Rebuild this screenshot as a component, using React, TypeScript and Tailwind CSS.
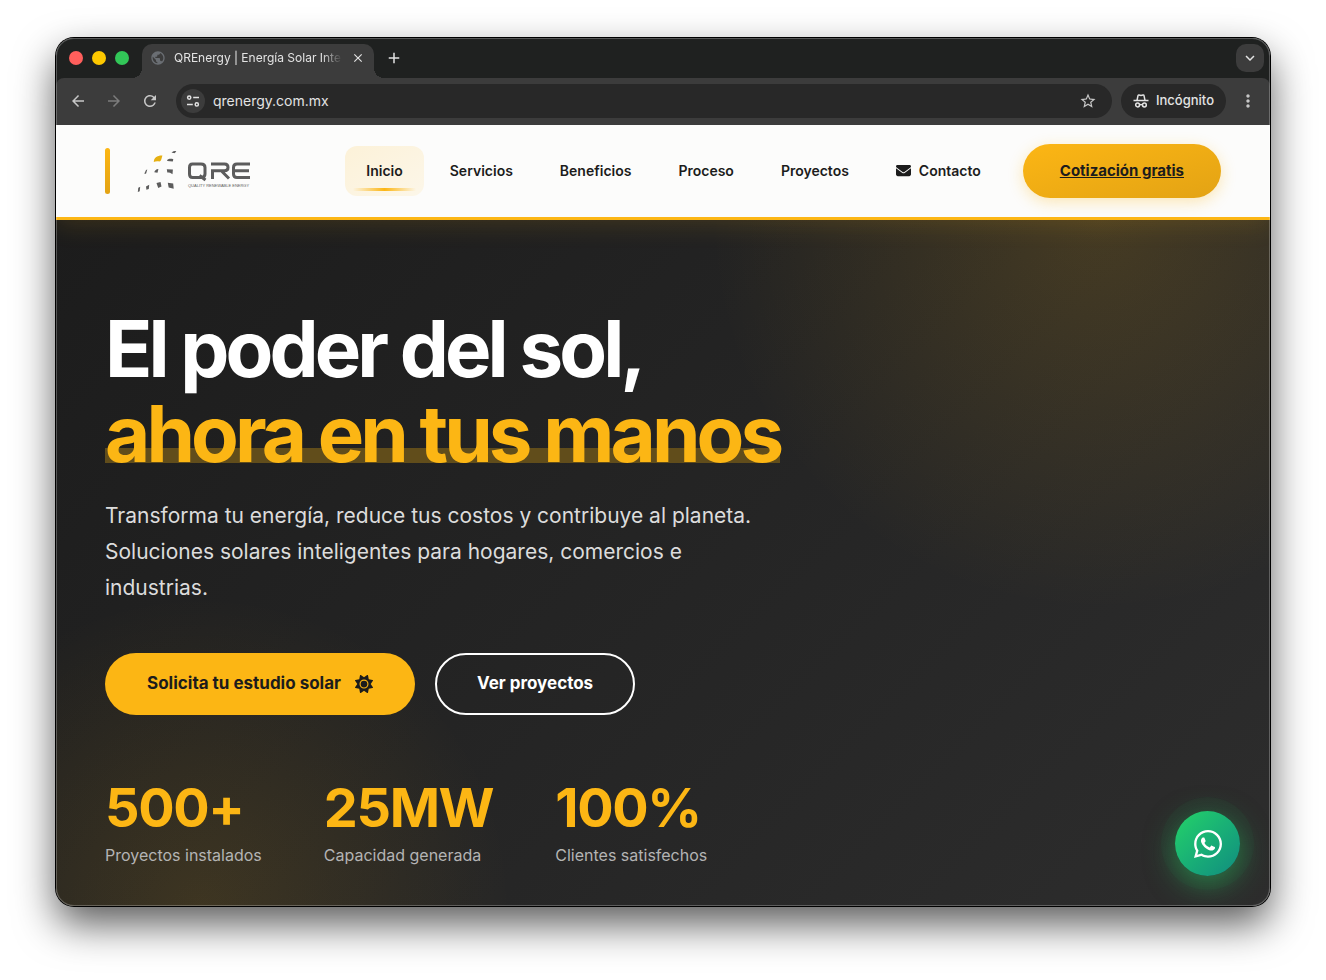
import type { ReactNode } from "react";
import { FaEnvelope, FaSun, FaWhatsapp } from "react-icons/fa6";
import {
  MdAdd,
  MdArrowBack,
  MdArrowForward,
  MdClose,
  MdKeyboardArrowDown,
  MdMoreVert,
  MdPublic,
  MdRefresh,
  MdStarBorder,
} from "react-icons/md";

function TuneIcon() {
  return (
    <svg width="14" height="14" viewBox="0 0 14 14" fill="none" stroke="#e3e3e3" strokeWidth="1.5" aria-hidden="true">
      <circle cx="3.2" cy="3.6" r="1.6" />
      <path d="M7.2 3.6H13" />
      <circle cx="10.8" cy="10.4" r="1.6" />
      <path d="M1 10.4h5.8" />
    </svg>
  );
}

function IncognitoIcon() {
  return (
    <svg width="16" height="16" viewBox="0 0 16 16" fill="none" stroke="#e3e3e3" strokeWidth="1.5" aria-hidden="true">
      <path d="M0.5 7.6h15" />
      <path d="M4 7.4 5 2.6c.1-.5.5-.7 1-.6L8 2.4l2-.4c.5-.1.9.1 1 .6l1 4.8" />
      <circle cx="4.6" cy="12" r="1.9" />
      <circle cx="11.4" cy="12" r="1.9" />
      <path d="M6.5 11.8c1-.5 2-.5 3 0" />
    </svg>
  );
}

function BrandLogo() {
  return (
    <svg width="114" height="44" viewBox="0 0 114 44" role="img" aria-label="QRE Quality Renewable Energy">
      <g fill="#5c5c5c">
        <path d="M34.5 3.6C35.5 2.3 37 1.9 39.3 1.9L37.8 4.2C36.8 4.2 35.5 4.2 34.5 3.6Z" />
        <path d="M30.2 11C31.5 9.7 34 9.6 36.3 10.2L35.8 12.5C34 12.2 32 12.2 30.2 12Z" />
        <path d="M7.3 24.8 9 20.9 10.3 20.6 9 24.8Z" />
        <path d="M17.3 23.3C17.8 21.3 19.3 20 21.4 20.1L20.5 23.8Z" />
        <path d="M29.8 20.2 35.9 20.6 35.5 25.2C34 23.9 32.3 23.5 30.3 23.5Z" />
        <path d="M.8 43 1.3 38.8 3.2 37.8 2.7 42.3Z" />
        <path d="M9 37.5 12.2 35.8 11.8 40 9.4 40.8Z" />
        <path d="M19.5 34 23.5 33 24.5 37.5 21.2 39Z" />
        <path d="M30.8 33.7 36.2 34.5 36.7 39.8 31.7 38.6Z" />
      </g>
      <path d="M16.8 13C16.8 8.8 19.8 6.3 25.4 6.4 24.6 9.3 24.3 12 22.300 12.6 20.5 12.200 18.5 12.3 16.8 13Z" fill="#e6b012" />
      <g fill="none" stroke="#5c5c5c" strokeWidth="3">
        <path d="M55.5 15h8.5q4 0 4 3.5v6.5q0 3.5-4 3.5h-8.5q-3 0-3-3.5v-6.5q0-3.5 3-3.5Z" />
        <path d="M62.5 26.5 68.5 31" />
        <path d="M75.5 30v-8.2h12q3.500 0 3.500-3.300v-.2q0-3.300-3.500-3.300H74M85 22.500 92 29.500" />
        <path d="M113 15H100q-3.5 0-3.5 3.5v6.5q0 3.5 3.5 3.5h13M97 21.8h15" />
      </g>
      <text x="51" y="37.5" fontSize="4" fontFamily="Liberation Sans, sans-serif" fill="#5c5c5c">
        QUALITY RENEWABLE ENERGY
      </text>
    </svg>
  );
}

function NavLink({ href, children, active = false }: { href: string; children: ReactNode; active?: boolean }) {
  return (
    <a
      href={href}
      className={
        active
          ? "relative flex h-[50px] items-center rounded-xl bg-linear-to-br from-[#fcb614]/15 to-[#fcb614]/8 px-[21px] pb-[2px] after:absolute after:inset-x-2 after:bottom-[5px] after:h-[3px] after:bg-linear-to-r after:from-transparent after:via-[#fcb614] after:to-transparent"
          : "flex h-[50px] items-center gap-2 rounded-xl px-[21px] pb-[2px]"
      }
    >
      {children}
    </a>
  );
}

function BrowserChrome() {
  return (
    <div className="relative z-10 bg-[#1f2120] text-[#e3e3e3]">
      <div className="flex h-10 items-end pr-[6px] pl-[13px]">
        <div className="flex h-10 items-center gap-[9px]">
          <button aria-label="Cerrar ventana" className="size-[14px] rounded-full bg-[#ff5f5c]" />
          <button aria-label="Minimizar" className="size-[14px] rounded-full bg-[#fdc800]" />
          <button aria-label="Maximizar" className="size-[14px] rounded-full bg-[#32c758]" />
        </div>
        <div className="relative ml-[13px] flex h-[34px] w-[232px] items-center rounded-t-[10px] bg-[#3c3c3c] pr-[9px] pb-[6px] pl-2 before:absolute before:bottom-0 before:-left-[10px] before:size-[10px] before:bg-[radial-gradient(circle_at_0_0,transparent_10px,#3c3c3c_10px)] after:absolute after:-right-[10px] after:bottom-0 after:size-[10px] after:bg-[radial-gradient(circle_at_100%_0,transparent_10px,#3c3c3c_10px)]">
          <MdPublic className="size-4 text-[#6a6e73]" />
          <span className="ml-2 flex-1 overflow-hidden mask-r-from-88% mask-r-to-100% text-[12px] whitespace-nowrap">
            QREnergy | Energía Solar Inteligente
          </span>
          <button aria-label="Cerrar pestaña" className="ml-[9px]">
            <MdClose className="size-[14px] stroke-current" />
          </button>
        </div>
        <button aria-label="Nueva pestaña" className="mb-[11px] ml-[11px]">
          <MdAdd className="size-[18px]" />
        </button>
        <button
          aria-label="Buscar pestañas"
          className="mb-[6px] ml-auto flex size-7 items-center justify-center rounded-[10px] bg-[#3c3c3c]"
        >
          <MdKeyboardArrowDown className="size-[18px] stroke-current" />
        </button>
      </div>
      <div className="flex h-[47px] items-center rounded-t-lg bg-[#3c3c3c] pr-3 pb-[2px] pl-[13px]">
        <button aria-label="Atrás">
          <MdArrowBack className="size-[18px] text-[#c7c7c7]" />
        </button>
        <button aria-label="Adelante" className="ml-[18px]">
          <MdArrowForward className="size-[18px] text-[#7c7c7c]" />
        </button>
        <button aria-label="Recargar" className="ml-[18px]">
          <MdRefresh className="size-[18px] text-[#c7c7c7]" />
        </button>
        <div className="ml-[17px] flex h-[34px] flex-1 items-center rounded-full bg-[#282828] pr-[15px] pl-[5px]">
          <button
            aria-label="Información del sitio"
            className="flex size-6 items-center justify-center rounded-full bg-[#3c3c3c]"
          >
            <TuneIcon />
          </button>
          <input
            aria-label="Dirección"
            defaultValue="qrenergy.com.mx"
            className="ml-2 min-w-0 flex-1 bg-transparent text-[14px] outline-none"
          />
          <button aria-label="Agregar a favoritos">
            <MdStarBorder className="size-[18px] text-[#c7c7c7]" />
          </button>
        </div>
        <button className="ml-[9px] flex h-[34px] items-center gap-[7px] rounded-full bg-[#282828] px-3 text-[13px] font-medium">
          <IncognitoIcon />
          Incógnito
        </button>
        <button aria-label="Menú" className="ml-3">
          <MdMoreVert className="size-5 text-[#c7c7c7]" />
        </button>
      </div>
    </div>
  );
}

function SiteHeader() {
  return (
    <header className="relative flex items-center justify-between border-b-[3px] border-[#fcb614] bg-[#fcfcfb] px-[49px] py-[19px] shadow-[0_4px_24px_rgba(252,182,20,0.15)]">
      <a href="#inicio" className="flex items-center gap-[27px]">
        <span className="h-[46px] w-[5px] rounded-sm bg-linear-to-b from-[#fcb614] to-[#e3a314]" />
        <BrandLogo />
      </a>
      <nav className="flex items-center gap-[5px] text-[14px] font-semibold text-[#1c1c1c]">
        <NavLink href="#inicio" active>
          Inicio
        </NavLink>
        <NavLink href="#servicios">Servicios</NavLink>
        <NavLink href="#beneficios">Beneficios</NavLink>
        <NavLink href="#proceso">Proceso</NavLink>
        <NavLink href="#proyectos">Proyectos</NavLink>
        <NavLink href="#contacto">
          <FaEnvelope className="size-[15px]" />
          Contacto
        </NavLink>
        <a
          href="#cotizacion"
          className="ml-4 flex h-[54px] items-center rounded-full bg-linear-to-br from-[#fcb614] to-[#e3a314] px-[37px] text-[15px] font-bold underline shadow-[0_4px_15px_rgba(252,182,20,0.3)]"
        >
          Cotización gratis
        </a>
      </nav>
    </header>
  );
}

const stats = [
  { value: "500+", label: "Proyectos instalados" },
  { value: "25MW", label: "Capacidad generada" },
  { value: "100%", label: "Clientes satisfechos" },
];

function Hero() {
  return (
    <main className="bg-[radial-gradient(circle_at_86%_0%,rgba(252,182,20,0.15),transparent_390px),radial-gradient(circle_at_12%_100%,rgba(252,182,20,0.12),transparent_310px),linear-gradient(135deg,#1c1c1c,#2d2d2d)] px-[49px] pt-[86px] pb-[39px]">
      <h1 className="text-[78px] leading-[85px] font-bold tracking-tighter text-white">
        El poder del sol,
        <br />
        <span className="bg-[linear-gradient(#614d1b,#614d1b)] bg-[length:100%_15px] bg-[position:0_78%] bg-no-repeat text-[#fcb614]">
          ahora en tus manos
        </span>
      </h1>
      <p className="mt-[22px] max-w-[675px] text-[21px] leading-9 text-[#dcdcdc]">
        Transforma tu energía, reduce tus costos y contribuye al planeta. Soluciones solares inteligentes para hogares,
        comercios e industrias.
      </p>
      <div className="mt-[47px] flex gap-5 text-[17px] font-bold">
        <a href="#estudio" className="flex h-[62px] items-center gap-[14px] rounded-full bg-[#fcb614] px-[42px] text-[#1c1c1c]">
          Solicita tu estudio solar
          <FaSun className="size-[18px]" />
        </a>
        <a href="#proyectos" className="flex h-[62px] items-center rounded-full border-2 border-white px-10 text-white">
          Ver proyectos
        </a>
      </div>
      <dl className="mt-[65px] flex gap-[62px]">
        {stats.map((stat) => (
          <div key={stat.label} className="flex flex-col-reverse gap-[7px]">
            <dt className="text-[16px] leading-6 text-[#b4b4b4]">{stat.label}</dt>
            <dd className="text-[54px] leading-14 font-bold tracking-tight text-[#fcb614]">{stat.value}</dd>
          </div>
        ))}
      </dl>
    </main>
  );
}

export default function App() {
  return (
    <div className="min-h-screen bg-white px-14 pt-[38px] pb-[74px] font-['Inter','Liberation_Sans',sans-serif]">
      <div className="relative overflow-hidden rounded-[18px] shadow-[0_0_0_1px_#000,0_18px_40px_rgba(0,0,0,0.65)] after:pointer-events-none after:absolute after:inset-0 after:z-20 after:rounded-[18px] after:border after:border-white/25">
        <BrowserChrome />
        <SiteHeader />
        <Hero />
        <a
          href="https://wa.me/"
          aria-label="WhatsApp"
          className="absolute right-[30px] bottom-[30px] flex size-[65px] items-center justify-center rounded-full bg-linear-to-br from-[#25d366] to-[#128c7e] text-white shadow-[0_0_0_14px_rgba(37,211,102,0.04),0_8px_30px_rgba(37,211,102,0.5)]"
        >
          <FaWhatsapp className="size-8" />
        </a>
      </div>
    </div>
  );
}
